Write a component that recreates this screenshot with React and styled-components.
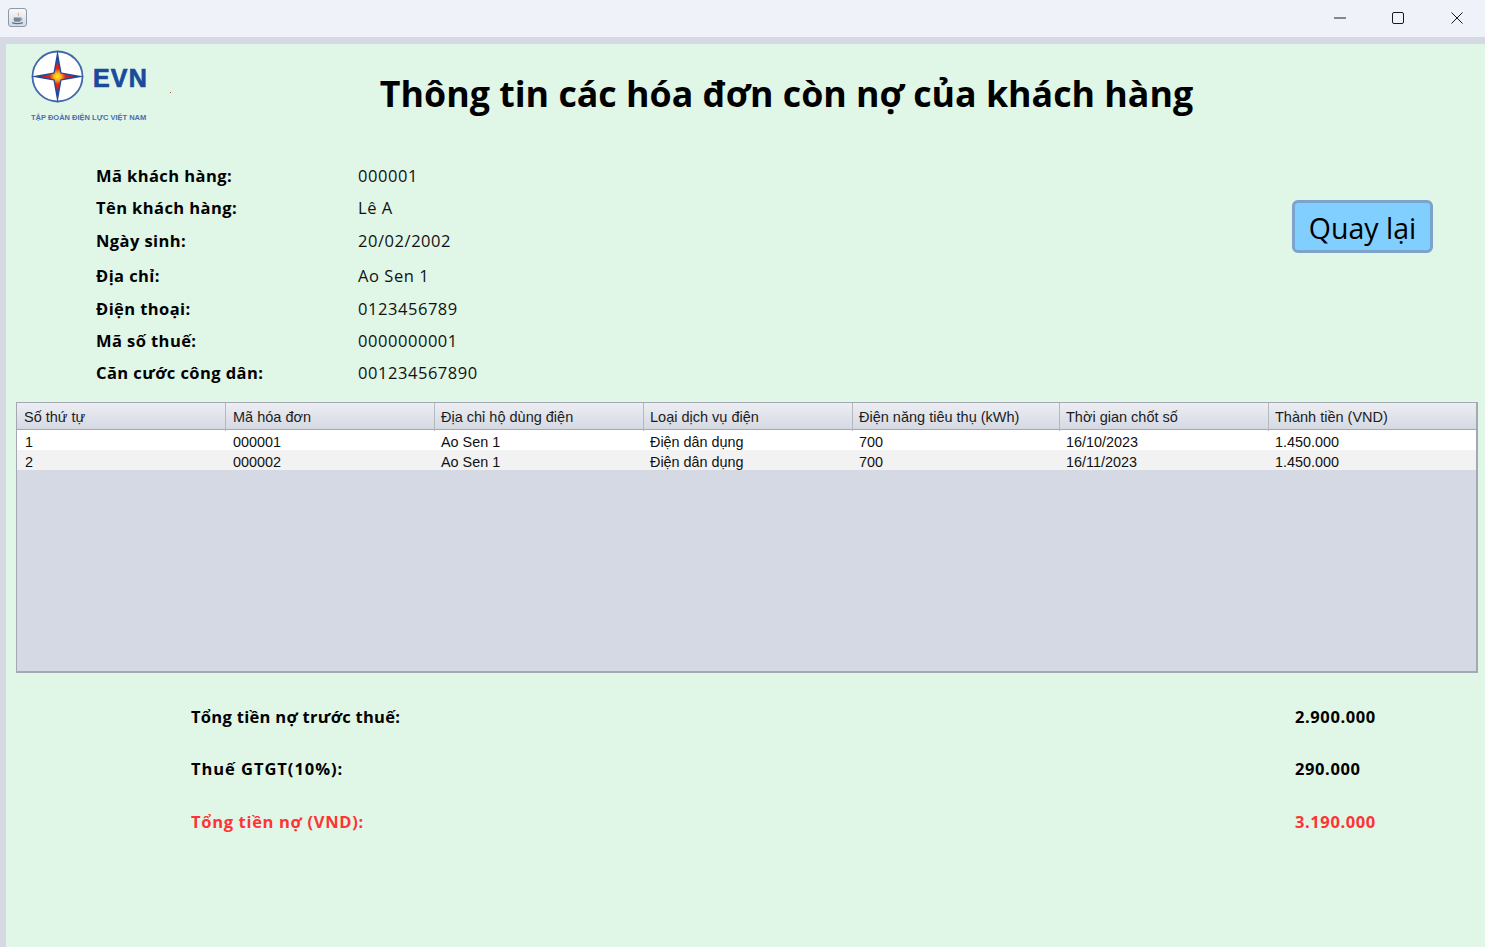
import React from "react";
import styled, { createGlobalStyle } from "styled-components";

const GlobalStyle = createGlobalStyle`
  html, body { margin: 0; padding: 0; height: 100%; overflow: hidden; }
  body { background: #d5d9e3; font-family: "Open Sans", "Noto Sans", sans-serif; }
`;

const Window = styled.div`
  width: 1485px;
  height: 947px;
  display: flex;
  flex-direction: column;
  background: #d5d9e3;
`;

const TitleBar = styled.div`
  height: 37px;
  display: flex;
  align-items: center;
  justify-content: space-between;
  background: #eff3f9;
`;

const AppIcon = styled.div`
  width: 19px;
  height: 19px;
  margin-left: 8px;
  margin-top: -2px;
  border: 1px solid #8b99a8;
  border-radius: 3px;
  box-sizing: border-box;
  background: linear-gradient(#f8f9fb, #d4d9df);
  display: flex;
  align-items: center;
  justify-content: center;
`;

const WindowButtons = styled.div`
  display: flex;
  margin-top: -1px;
  margin-right: -1px;
`;

const WindowButton = styled.div`
  width: 58.5px;
  height: 36px;
  display: flex;
  align-items: center;
  justify-content: center;
  color: #1a1a1a;
`;

const Content = styled.div`
  flex: 1;
  margin: 7px 0 0 6px;
  background: #e0f6e7;
  display: flex;
  flex-direction: column;
`;

const Header = styled.div`
  height: 89px;
  display: flex;
  position: relative;
`;

const Brand = styled.div`
  width: 165px;
  padding: 6px 0 0 25px;
  box-sizing: border-box;
  display: flex;
  flex-direction: column;
`;

const BrandTop = styled.div`
  display: flex;
  align-items: center;
  gap: 9px;
`;

const BrandName = styled.span`
  font-family: "Liberation Sans", sans-serif;
  font-weight: 700;
  font-size: 25px;
  letter-spacing: 1.2px;
  color: #1b4a9b;
  -webkit-text-stroke: 0.7px #1b4a9b;
  margin-top: 3px;
`;

const BrandSub = styled.span`
  font-family: "Liberation Sans", sans-serif;
  font-weight: 700;
  font-size: 7.5px;
  line-height: 10px;
  color: #4a6fae;
  margin-top: 10px;
  white-space: nowrap;
`;

const Speck = styled.i`
  position: absolute;
  left: 164px;
  top: 48px;
  width: 1px;
  height: 1px;
  background: #b8502a;
`;

const Title = styled.h1`
  flex: 1;
  margin: 25px 0 0;
  font-size: 35.75px;
  line-height: 48px;
  height: 48px;
  font-weight: 700;
  color: #000;
  text-align: center;
  padding-left: 66px;
  padding-right: 149px;
  white-space: nowrap;
`;

const InfoArea = styled.div`
  height: 269px;
  display: flex;
  justify-content: space-between;
  padding-left: 90px;
  padding-right: 52px;
  box-sizing: border-box;
`;

const InfoList = styled.div`
  padding-top: 26px;
  display: flex;
  flex-direction: column;
`;

const InfoRow = styled.div`
  height: ${(p) => p.$h}px;
  display: flex;
  align-items: center;
  font-size: 16.5px;
  white-space: nowrap;
`;

const InfoLabel = styled.span`
  width: 262px;
  font-weight: 700;
  letter-spacing: 0.42px;
  color: #000;
`;

const InfoValue = styled.span`
  color: #111;
  letter-spacing: 0.55px;
`;

const BackButton = styled.button`
  width: 141px;
  height: 53px;
  margin-top: 67px;
  border: 3px solid #7ba3cb;
  border-radius: 6px;
  background: #80cfff;
  font-family: inherit;
  font-size: 28.5px;
  color: #000;
  padding: 2px 0 0;
  box-sizing: border-box;
`;

const TableBox = styled.div`
  width: 1462px;
  height: 271px;
  margin-left: 10px;
  box-sizing: border-box;
  border: 1px solid #a3a8b2;
  border-right-width: 2px;
  border-bottom-width: 2px;
  background: #d5d9e3;
  font-family: "Liberation Sans", Arial, sans-serif;
  font-size: 14.5px;
`;

const cols = "209px 209px 209px 209px 207px 209px 1fr";

const HeaderRow = styled.div`
  display: grid;
  grid-template-columns: ${cols};
  height: 27px;
  border-bottom: 1px solid #a3a8b2;
  background: linear-gradient(#eceef2, #d5d9e3);
  box-sizing: border-box;
`;

const HeaderCell = styled.div`
  padding-left: ${(p) => (p.$first ? 7 : 6)}px;
  line-height: 28px;
  color: #1c1c1c;
  white-space: nowrap;
  border-right: 1px solid #b4b8c1;
  &:last-child { border-right: 0; }
`;

const BodyRow = styled.div`
  display: grid;
  grid-template-columns: ${cols};
  height: 20px;
  background: ${(p) => (p.$alt ? "#f2f2f2" : "#fff")};
`;

const BodyCell = styled.div`
  padding-left: ${(p) => p.$pad}px;
  font-size: 14.4px;
  line-height: 24px;
  height: 20px;
  color: #111;
  white-space: nowrap;
`;

const Summary = styled.div`
  padding: 17px 0 0 185px;
  display: flex;
  flex-direction: column;
`;

const SummaryRow = styled.div`
  height: 52.5px;
  display: flex;
  align-items: center;
  font-size: 16.5px;
  font-weight: 700;
  color: ${(p) => (p.$red ? "#ff3333" : "#000")};
`;

const SummaryLabel = styled.span`
  width: 1104px;
  letter-spacing: ${(p) => p.$spacing}px;
`;

const SummaryValue = styled.span`
  letter-spacing: 0.6px;
`;

const JavaIcon = () => (
  <svg width="15" height="15" viewBox="0 0 14 14">
    <path d="M7.500 .5c1.200 1.800-2.200 2.800-.6 5C5.500 3.500 8.500 3 7.500 .5z" fill="#e8772e" />
    <path d="M9 2.800c-2.200 1-1.800 2.200-.9 3C7.800 4.800 8.200 3.800 9 2.800z" fill="#e8772e" />
    <path d="M3.500 7h6.500v2.500c0 1-1 1.500-3.200 1.500s-3.300-.5-3.300-1.500z" fill="#6f88a0" />
    <path d="M10 7.500c1.800 0 1.800 2-.3 2.200" stroke="#6f88a0" strokeWidth=".8" fill="none" />
    <path d="M2 11.800c3 1 7 1 10 0" stroke="#4f7392" strokeWidth="1.100" fill="none" />
  </svg>
);

const LogoMark = () => (
  <svg width="53" height="53" viewBox="0 0 53 53">
    <defs>
      <radialGradient id="core" cx="50%" cy="50%" r="50%">
        <stop offset="0%" stopColor="#ffee1a" />
        <stop offset="22%" stopColor="#f9b01c" />
        <stop offset="48%" stopColor="#e2231a" />
        <stop offset="100%" stopColor="#c8182a" />
      </radialGradient>
    </defs>
    <circle cx="26.500" cy="26.500" r="25" fill="#fff" stroke="#4167ae" strokeWidth="1.800" />
    <path d="M26.500 0 L30.500 22.500 L53 26.500 L30.500 30.500 L26.500 53 L22.500 30.500 L0 26.500 L22.500 22.500 Z" fill="#1f4a9c" />
    <path d="M26.500 10 L29.500 23.500 L43 26.500 L29.500 29.500 L26.500 43 L23.500 29.500 L10 26.500 L23.500 23.500 Z" fill="url(#core)" />
  </svg>
);

const info = [
  ["Mã khách hàng:", "000001", 32],
  ["Tên khách hàng:", "Lê A", 32.5],
  ["Ngày sinh:", "20/02/2002", 33.5],
  ["Địa chỉ:", "Ao Sen 1", 36],
  ["Điện thoại:", "0123456789", 30.5],
  ["Mã số thuế:", "0000000001", 33],
  ["Căn cước công dân:", "001234567890", 32.5],
];

const headers = [
  "Số thứ tự",
  "Mã hóa đơn",
  "Địa chỉ hộ dùng điện",
  "Loại dịch vụ điện",
  "Điện năng tiêu thụ (kWh)",
  "Thời gian chốt số",
  "Thành tiền (VND)",
];

const rows = [
  ["1", "000001", "Ao Sen 1", "Điện dân dụng", "700", "16/10/2023", "1.450.000"],
  ["2", "000002", "Ao Sen 1", "Điện dân dụng", "700", "16/11/2023", "1.450.000"],
];

const summary = [
  ["Tổng tiền nợ trước thuế:", "2.900.000", false, 0.3],
  ["Thuế GTGT(10%):", "290.000", false, 0.95],
  ["Tổng tiền nợ (VND):", "3.190.000", true, 0.68],
];

const bodyPad = [8, 7, 6, 6, 6, 6, 6];

export default function App() {
  return (
    <Window>
      <GlobalStyle />
      <TitleBar>
        <AppIcon><JavaIcon /></AppIcon>
        <WindowButtons>
          <WindowButton>
            <svg width="12" height="12" viewBox="0 0 12 12"><path d="M0 6h12" stroke="currentColor" fill="none" /></svg>
          </WindowButton>
          <WindowButton>
            <svg width="12" height="12" viewBox="0 0 12 12"><rect x=".5" y=".5" width="11" height="11" rx="1.500" stroke="currentColor" fill="none" /></svg>
          </WindowButton>
          <WindowButton>
            <svg width="12" height="12" viewBox="0 0 12 12"><path d="M.5.500l11 11M11.500.500l-11 11" stroke="currentColor" fill="none" /></svg>
          </WindowButton>
        </WindowButtons>
      </TitleBar>
      <Content>
        <Header>
          <Brand>
            <BrandTop>
              <LogoMark />
              <BrandName>EVN</BrandName>
            </BrandTop>
            <BrandSub>TẬP ĐOÀN ĐIỆN LỰC VIỆT NAM</BrandSub>
          </Brand>
          <Speck />
          <Title>Thông tin các hóa đơn còn nợ của khách hàng</Title>
        </Header>
        <InfoArea>
          <InfoList>
            {info.map(([label, value, h]) => (
              <InfoRow key={label} $h={h}>
                <InfoLabel>{label}</InfoLabel>
                <InfoValue>{value}</InfoValue>
              </InfoRow>
            ))}
          </InfoList>
          <BackButton>Quay lại</BackButton>
        </InfoArea>
        <TableBox>
          <HeaderRow>
            {headers.map((h, i) => <HeaderCell key={h} $first={i < 2}>{h}</HeaderCell>)}
          </HeaderRow>
          {rows.map((row, i) => (
            <BodyRow key={row[0]} $alt={i % 2 === 1}>
              {row.map((c, j) => <BodyCell key={j} $pad={bodyPad[j]}>{c}</BodyCell>)}
            </BodyRow>
          ))}
        </TableBox>
        <Summary>
          {summary.map(([label, value, red, spacing]) => (
            <SummaryRow key={label} $red={red}>
              <SummaryLabel $spacing={spacing}>{label}</SummaryLabel>
              <SummaryValue>{value}</SummaryValue>
            </SummaryRow>
          ))}
        </Summary>
      </Content>
    </Window>
  );
}
